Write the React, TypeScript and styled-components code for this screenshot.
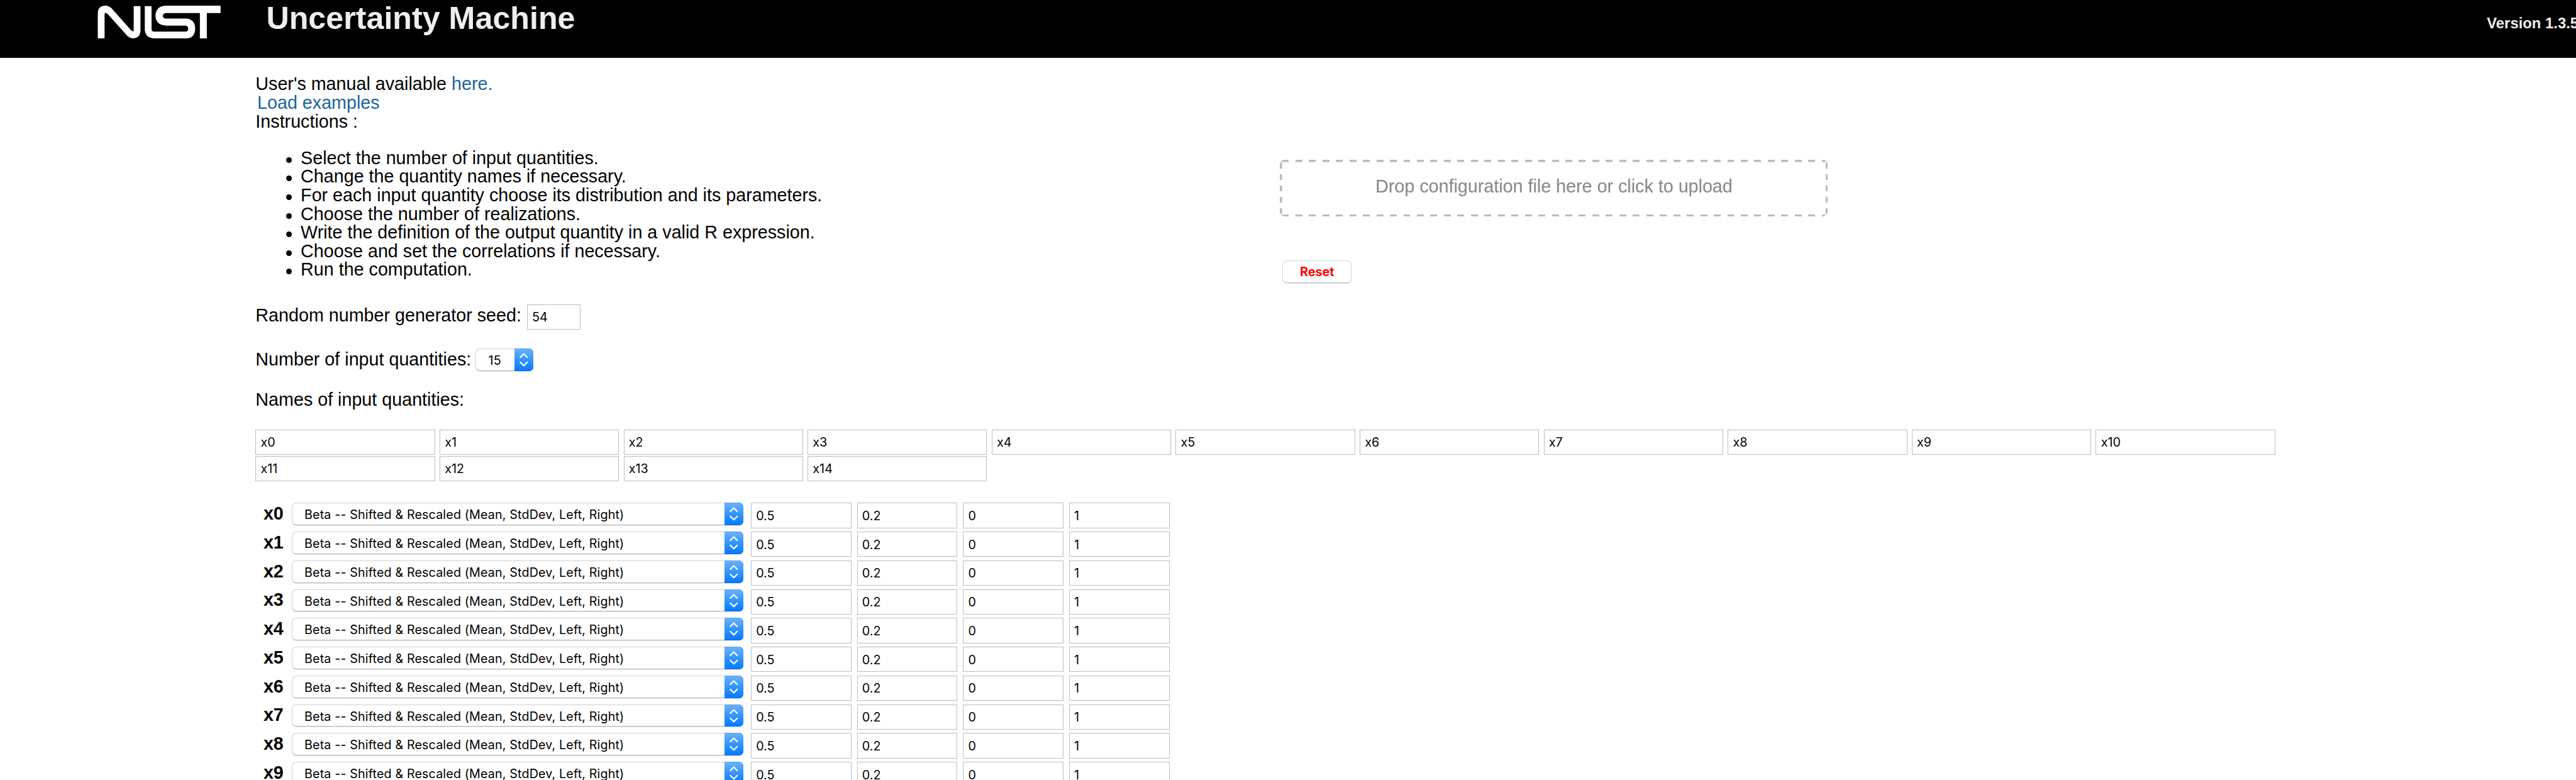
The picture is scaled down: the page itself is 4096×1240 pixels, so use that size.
import React from "react";
import styled, { createGlobalStyle } from "styled-components";

const K = 4096 / 4566;
const u = (n: number) => `${(n * K).toFixed(3)}px`;

const GlobalStyle = createGlobalStyle`
  html, body { margin: 0; padding: 0; background: #fff; overflow: hidden; }
  *, *::before, *::after { box-sizing: border-box; }
`;

const Page = styled.div`
  width: 4096px;
  height: 1240px;
  overflow: hidden;
  background: #fff;
  color: #000;
  font-family: "Liberation Sans", Helvetica, Arial, sans-serif;
  font-size: ${u(32)};
  line-height: ${u(33)};
  white-space: nowrap;
`;

const Header = styled.header`
  display: flex;
  align-items: flex-start;
  height: ${u(102)};
  background: #000;
  color: #eee;
  overflow: hidden;
`;

const Logo = styled.svg`
  flex: none;
  width: ${u(240)};
  height: ${u(80)};
  margin-left: ${u(165)};
`;

const Title = styled.h1`
  flex: none;
  width: ${u(3936)};
  margin: 0 0 0 ${u(67)};
  font-size: ${u(56)};
  line-height: ${u(66)};
  font-weight: bold;
`;

const Version = styled.span`
  flex: none;
  margin-top: ${u(25)};
  font-size: ${u(26.6)};
  line-height: ${u(33)};
  font-weight: bold;
`;

const Main = styled.main`
  padding: ${u(31)} 0 0 ${u(453)};
`;

const Top = styled.section`
  display: grid;
  grid-template-columns: ${u(1816)} ${u(971)};
`;

const Left = styled.div`
  display: flex;
  flex-direction: column;
`;

const Right = styled.div`
  display: flex;
  flex-direction: column;
  align-items: flex-start;
  padding-top: ${u(150)};
`;

const Link = styled.a`
  color: #1a659e;
  text-decoration: none;
`;

const ExamplesLink = styled(Link)`
  padding-left: ${u(3)};
`;

const Steps = styled.ul`
  margin: ${u(32)} 0 ${u(44)};
  padding: 0;
  list-style: none;
`;

const Step = styled.li`
  display: flex;
  align-items: center;

  &::before {
    content: "";
    width: ${u(10)};
    height: ${u(10)};
    margin: ${u(6)} ${u(16)} 0 ${u(54)};
    border-radius: 50%;
    background: #000;
  }
`;

const Field = styled.div<{ $gap: number }>`
  display: flex;
  align-items: flex-start;
  margin-bottom: ${(p) => u(p.$gap)};
`;

const FieldLabel = styled.label<{ $width: number; $top: number }>`
  width: ${(p) => u(p.$width)};
  padding-top: ${(p) => u(p.$top)};
`;

const TextBox = styled.input<{ $width: number }>`
  display: block;
  width: ${(p) => u(p.$width)};
  height: ${u(45)};
  margin: 0;
  padding: ${u(1)} ${u(4)} 0 ${u(8)};
  border: 1px solid #bdbdbd;
  border-radius: 0;
  outline: none;
  background: #fff;
  color: #000;
  font-family: Inter, "Liberation Sans", sans-serif;
  font-size: ${u(22)};
`;

const DropZone = styled.div`
  display: flex;
  justify-content: center;
  width: ${u(971)};
  height: ${u(101)};
  padding-top: ${u(31.5)};
  border-radius: ${u(9)};
  color: #888;
  --across: repeating-linear-gradient(90deg, transparent 0 ${u(3.8)}, #bbb ${u(3.8)} ${u(16)}, transparent ${u(16)} ${u(23.92)});
  --down: repeating-linear-gradient(180deg, transparent 0 ${u(5)}, #bbb ${u(5)} ${u(15.1)}, transparent ${u(15.1)} ${u(20.2)});
  background:
    var(--across) 0 0 / 100% ${u(4)} no-repeat,
    var(--across) 0 100% / 100% ${u(4)} no-repeat,
    var(--down) 0 0 / ${u(4)} 100% no-repeat,
    var(--down) 100% 0 / ${u(4)} 100% no-repeat;
`;

const ResetButton = styled.button`
  width: ${u(122)};
  height: ${u(40)};
  margin: ${u(77.5)} 0 0 ${u(4.5)};
  padding: 0;
  border: 1px solid #d4d4d4;
  border-bottom-color: #bcbcbc;
  border-radius: ${u(8)};
  box-shadow: 0 1px 1px rgba(0, 0, 0, 0.12);
  background: #fff;
  color: #f00;
  font-family: Inter, "Liberation Sans", sans-serif;
  font-size: ${u(22)};
  font-weight: bold;
`;

const SelectBox = styled.div<{ $width: number; $pad: number }>`
  display: flex;
  justify-content: space-between;
  width: ${(p) => u(p.$width)};
  height: ${u(40)};
  padding-left: ${(p) => u(p.$pad)};
  border: 1px solid #d0d0d0;
  border-bottom-color: #b4b4b4;
  border-right: 0;
  border-radius: ${u(8)};
  box-shadow: 0 1px 1px rgba(0, 0, 0, 0.1);
  background: #fff;
  font-family: Inter, "Liberation Sans", sans-serif;
  font-size: ${u(22)};
  line-height: ${u(42)};
`;

const SelectText = styled.span`
  letter-spacing: ${u(0.14)};
`;

const Stepper = styled.span`
  display: flex;
  width: ${u(33)};
  height: ${u(40)};
  margin-top: -1px;
  border-radius: 0 ${u(8)} ${u(8)} 0;
  background: linear-gradient(#6db3fa, #2f92fc 55%, #057aff);
  box-shadow: inset 0 -1px 0 #0a66e8, inset 0 1px 0 #559ff0;
`;

const Arrows = styled.svg`
  width: ${u(33)};
  height: ${u(40)};
`;

const Names = styled.section`
  display: grid;
  grid-template-columns: repeat(11, ${u(326.2)});
  grid-auto-rows: ${u(47)};
  margin-top: ${u(35.6)};
`;

const Rows = styled.section`
  display: flex;
  flex-direction: column;
  margin-top: ${u(36)};
`;

const Row = styled.div`
  display: flex;
  align-items: flex-start;
  height: ${u(51)};
`;

const RowName = styled.b`
  width: ${u(64.5)};
  padding: ${u(3.2)} 0 0 ${u(14)};
`;

const Params = styled.div`
  display: grid;
  grid-template-columns: repeat(4, ${u(188)});
  margin-left: ${u(13.5)};
`;

const steps = [
  "Select the number of input quantities.",
  "Change the quantity names if necessary.",
  "For each input quantity choose its distribution and its parameters.",
  "Choose the number of realizations.",
  "Write the definition of the output quantity in a valid R expression.",
  "Choose and set the correlations if necessary.",
  "Run the computation.",
];

const names = Array.from({ length: 15 }, (_, i) => `x${i}`);
const params = ["0.5", "0.2", "0", "1"];

function Select({ width, pad, children }: { width: number; pad: number; children: React.ReactNode }) {
  return (
    <SelectBox $width={width} $pad={pad}>
      <SelectText>{children}</SelectText>
      <Stepper>
        <Arrows viewBox="0 0 33 40" fill="none" stroke="#fff" strokeWidth="2.4" strokeLinecap="round" strokeLinejoin="round">
          <path d="M10.3 15.5 16.5 9.4 22.7 15.5M10.3 24.3 16.5 30.4 22.7 24.3" />
        </Arrows>
      </Stepper>
    </SelectBox>
  );
}

export default function App() {
  return (
    <Page>
      <GlobalStyle />
      <Header>
        <Logo viewBox="0 0 720 240" fill="#fff" aria-label="NIST">
          <path d="M25 204V70C25 42 43 30 64 30C78 30 88 34 97 43L204 163Q216 172 216 159V33H252V163C252 190 234 204 212 204C199 204 190 199 182 191L76 73Q61 62 61 76V204Z" />
          <path d="M275 33H311V155Q311 168 324 168H492C502 168 506 160 506 152C506 143 500 136 490 136H388C350 136 332 112 332 84C332 52 352 30 388 30H678V69H605V204H568V69H390C378 69 371 76 371 85C371 94 378 99 390 99H492C528 99 543 122 543 152C543 185 525 204 497 204H328C292 204 275 185 275 155Z" />
        </Logo>
        <Title>Uncertainty Machine</Title>
        <Version>Version 1.3.5</Version>
      </Header>
      <Main>
        <Top>
          <Left>
            <div>
              User's manual available <Link>here.</Link>
            </div>
            <ExamplesLink>Load examples</ExamplesLink>
            <div>Instructions :</div>
            <Steps>
              {steps.map((s) => (
                <Step key={s}>{s}</Step>
              ))}
            </Steps>
            <Field $gap={34}>
              <FieldLabel $width={481} $top={3.8}>Random number generator seed:</FieldLabel>
              <TextBox $width={95} defaultValue="54" />
            </Field>
            <Field $gap={34.4}>
              <FieldLabel $width={390} $top={2.8}>Number of input quantities:</FieldLabel>
              <Select width={102} pad={21.5}>15</Select>
            </Field>
            <div>Names of input quantities:</div>
          </Left>
          <Right>
            <DropZone>Drop configuration file here or click to upload</DropZone>
            <ResetButton>Reset</ResetButton>
          </Right>
        </Top>
        <Names>
          {names.map((n) => (
            <TextBox key={n} $width={318} defaultValue={n} />
          ))}
        </Names>
        <Rows>
          {names.slice(0, 10).map((n) => (
            <Row key={n}>
              <RowName>{n}</RowName>
              <Select width={800} pad={21}>Beta -- Shifted &amp; Rescaled (Mean, StdDev, Left, Right)</Select>
              <Params>
                {params.map((v) => (
                  <TextBox key={v} $width={178} defaultValue={v} />
                ))}
              </Params>
            </Row>
          ))}
        </Rows>
      </Main>
    </Page>
  );
}
